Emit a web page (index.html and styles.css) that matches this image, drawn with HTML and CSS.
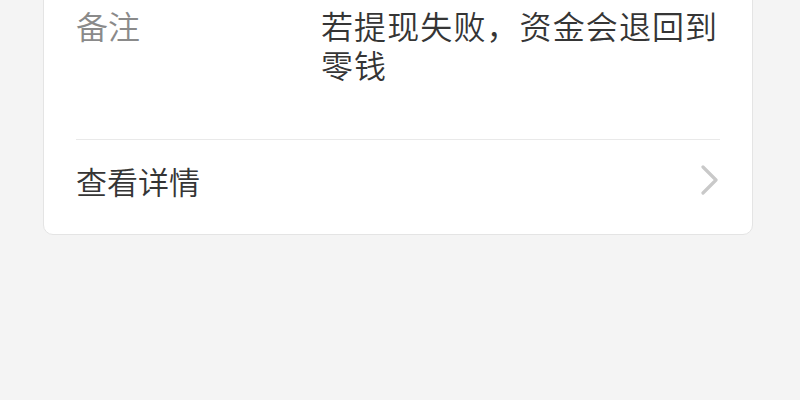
FILE: index.html
```html
<!DOCTYPE html>
<html lang="zh-CN">
<head>
<meta charset="utf-8">
<title>提现详情</title>
<link rel="stylesheet" href="styles.css">
</head>
<body>
  <div class="card">
    <div class="info-row">
      <div class="info-label">备注</div>
      <div class="info-value">若提现失败，资金会退回到零钱</div>
    </div>
    <div class="divider"></div>
    <div class="link-row">
      <span class="link-text">查看详情</span>
      <svg class="chevron" width="20" height="30" viewBox="0 0 20 30">
        <path d="M3 2 L16 15 L3 28" fill="none" stroke="#c9c9c9" stroke-width="3.2" stroke-linecap="round" stroke-linejoin="round"/>
      </svg>
    </div>
  </div>
</body>
</html>
```
FILE: styles.css
```css
html, body {
  margin: 0;
  padding: 0;
  background: #f4f4f4;
  height: 100%;
  overflow: hidden;
}

body {
  font-family: "Noto Sans CJK SC", "Noto Sans", sans-serif;
  font-weight: 350;
}

.card {
  margin: -20px 47px 0 43px;
  background: #ffffff;
  border: 1px solid #e4e4e4;
  border-radius: 10px;
  padding: 0 32px 0 32px;
}

.info-row {
  display: flex;
  padding-top: 25px;
  padding-bottom: 55px;
}

.info-label {
  width: 245px;
  flex-shrink: 0;
  font-size: 32px;
  line-height: 39px;
  color: #8a8a8a;
}

.info-value {
  flex: 1;
  font-size: 32px;
  line-height: 39px;
  letter-spacing: 1.1px;
  color: #353535;
}

.divider {
  height: 1px;
  background: #e9e9e9;
}

.link-row {
  display: flex;
  align-items: center;
  justify-content: space-between;
  height: 80px;
  padding-bottom: 14px;
}

.link-text {
  font-size: 31px;
  color: #353535;
}

.chevron {
  display: block;
}
```
